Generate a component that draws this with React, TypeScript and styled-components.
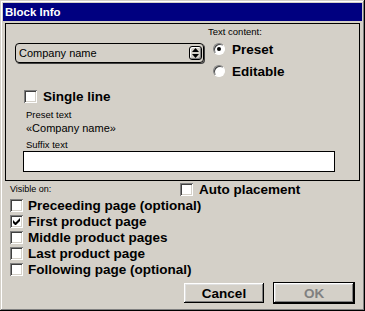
import * as React from 'react';
import styled, { createGlobalStyle } from 'styled-components';

const GlobalStyle = createGlobalStyle`
  html, body {
    margin: 0;
    padding: 0;
    background: #d4d0c8;
  }
  body {
    font-family: "Liberation Sans", Arial, sans-serif;
    color: #000;
  }
`;

const Window = styled.div`
  width: 365px;
  height: 311px;
  box-sizing: border-box;
  padding: 3px;
  background: #d4d0c8;
  box-shadow: inset -1px -1px #000, inset 1px 1px #d4d0c8, inset -2px -2px #808080,
    inset 2px 2px #fff;
  display: flex;
  flex-direction: column;
`;

const TitleBar = styled.div`
  height: 18px;
  background: #000080;
  color: #fff;
  font-weight: bold;
  font-size: 11.5px;
  padding-left: 2px;
  display: flex;
  align-items: center;
`;

const GroupBox = styled.div`
  margin: 2px 2px 0;
  height: 158px;
  box-sizing: border-box;
  border: 1px solid #000;
  padding: 2px 0 0 9px;
  display: flex;
  flex-direction: column;
`;

const TopRow = styled.div`
  display: flex;
  gap: 4px;
`;

const Dropdown = styled.div`
  width: 189px;
  height: 20px;
  box-sizing: border-box;
  margin-top: 17px;
  border: 1px solid #000;
  border-radius: 4px;
  box-shadow: 1px 1px 0 #404040;
  display: flex;
  align-items: center;
  padding-left: 3px;
  font-size: 11px;
`;

const ArrowBox = styled.div`
  margin-left: auto;
  margin-right: 1px;
  width: 13px;
  height: 14px;
  box-sizing: border-box;
  border: 1px solid #000;
  border-radius: 3px;
  box-shadow: inset 1px 1px #fff, inset -1px -1px #808080;
  display: flex;
  align-items: center;
  justify-content: center;
`;

const RadioColumn = styled.div`
  display: flex;
  flex-direction: column;
`;

const SmallLabel = styled.div<{ $size?: number }>`
  font-size: ${({ $size }) => $size ?? 9.5}px;
  line-height: 12px;
`;

const RadioRow = styled.label`
  height: 22px;
  display: flex;
  align-items: center;
  gap: 7px;
  padding-left: 5px;
  font-weight: bold;
  font-size: 13.5px;
`;

const Radio = styled.span<{ $checked?: boolean }>`
  position: relative;
  width: 12px;
  height: 12px;
  box-sizing: border-box;
  border-radius: 50%;
  background: #fff;
  border: 1px solid;
  border-color: #808080 #fff #fff #808080;
  box-shadow: inset 1px 1px #404040;

  &::after {
    content: '';
    display: ${({ $checked }) => ($checked ? 'block' : 'none')};
    position: absolute;
    left: 3px;
    top: 3px;
    width: 4px;
    height: 4px;
    border-radius: 50%;
    background: #000;
  }
`;

const CheckRow = styled.label<{ $indent?: number; $gap?: number }>`
  height: 16px;
  display: flex;
  align-items: center;
  gap: ${({ $gap }) => $gap ?? 5}px;
  padding-left: ${({ $indent }) => $indent ?? 0}px;
  font-weight: bold;
  font-size: 13.5px;
  white-space: nowrap;
`;

const Box = styled.span`
  width: 13px;
  height: 13px;
  flex: none;
  box-sizing: border-box;
  background: #fff;
  box-shadow: inset 1px 1px #808080, inset -1px -1px #fff, inset 2px 2px #404040,
    inset -2px -2px #d4d0c8;
  display: flex;
  align-items: center;
  justify-content: center;
`;

const PresetBlock = styled.div`
  margin-top: 5px;
  padding-left: 11px;
  display: flex;
  flex-direction: column;
`;

const PresetValue = styled.div`
  font-size: 11px;
  line-height: 14px;
  margin-bottom: 4px;
`;

const SuffixInput = styled.div`
  margin-left: 8px;
  width: 312px;
  height: 21px;
  box-sizing: border-box;
  border: 1px solid #000;
  background: #fff;
`;

const Lower = styled.div`
  flex: 1;
  padding: 0 7px;
  display: flex;
  flex-direction: column;
`;

const VisibleRow = styled.div`
  height: 16px;
  display: flex;
`;

const VisibleLabel = styled.div`
  width: 170px;
  align-self: flex-end;
  font-size: 9px;
  line-height: 12px;
  margin-bottom: 2px;
`;

const ButtonRow = styled.div`
  margin-top: 5px;
  display: flex;
  justify-content: flex-end;
  align-items: center;
  gap: 9px;
`;

const Button = styled.button<{ $default?: boolean; $disabled?: boolean }>`
  width: ${({ $default }) => ($default ? 82 : 80)}px;
  height: ${({ $default }) => ($default ? 22 : 20)}px;
  box-sizing: border-box;
  padding: 0;
  background: #d4d0c8;
  font-family: "Liberation Sans", Arial, sans-serif;
  font-weight: bold;
  font-size: 13.5px;
  color: ${({ $disabled }) => ($disabled ? '#808080' : '#000')};
  border: ${({ $default }) => ($default ? '1px solid #000' : 'none')};
  box-shadow: inset -1px -1px #000, inset 1px 1px #fff, inset -2px -2px #808080,
    inset 2px 2px #dfdfdf;
`;

const Check = ({ checked }: { checked?: boolean }) => (
  <Box>
    {checked && (
      <svg width="7" height="7" viewBox="0 0 7 7">
        <path d="M0 2v3l2 2h1l4-4V0L2.5 4.5z" fill="#000" />
      </svg>
    )}
  </Box>
);

const pages = [
  { label: 'Preceeding page (optional)', checked: false },
  { label: 'First product page', checked: true },
  { label: 'Middle product pages', checked: false },
  { label: 'Last product page', checked: false },
  { label: 'Following page (optional)', checked: false },
];

export default function App() {
  return (
    <>
      <GlobalStyle />
      <Window>
        <TitleBar>Block Info</TitleBar>
        <GroupBox>
          <TopRow>
            <Dropdown>
              Company name
              <ArrowBox>
                <svg width="7" height="10" viewBox="0 0 7 10">
                  <path d="M3.5 0L7 4H0z M0 6h7L3.5 10z" fill="#000" />
                </svg>
              </ArrowBox>
            </Dropdown>
            <RadioColumn>
              <SmallLabel>Text content:</SmallLabel>
              <RadioRow>
                <Radio $checked />
                Preset
              </RadioRow>
              <RadioRow>
                <Radio />
                Editable
              </RadioRow>
            </RadioColumn>
          </TopRow>
          <CheckRow $indent={9} $gap={6} style={{ marginTop: 6 }}>
            <Check />
            Single line
          </CheckRow>
          <PresetBlock>
            <SmallLabel>Preset text</SmallLabel>
            <PresetValue>«Company name»</PresetValue>
            <SmallLabel>Suffix text</SmallLabel>
          </PresetBlock>
          <SuffixInput />
        </GroupBox>
        <Lower>
          <VisibleRow>
            <VisibleLabel>Visible on:</VisibleLabel>
            <CheckRow $gap={6}>
              <Check />
              Auto placement
            </CheckRow>
          </VisibleRow>
          {pages.map((p) => (
            <CheckRow key={p.label}>
              <Check checked={p.checked} />
              {p.label}
            </CheckRow>
          ))}
          <ButtonRow>
            <Button>Cancel</Button>
            <Button $default $disabled>
              OK
            </Button>
          </ButtonRow>
        </Lower>
      </Window>
    </>
  );
}
